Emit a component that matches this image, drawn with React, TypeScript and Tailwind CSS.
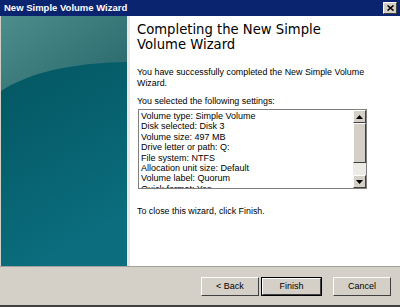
import React from "react";

const settings = [
  "Volume type: Simple Volume",
  "Disk selected: Disk 3",
  "Volume size: 497 MB",
  "Drive letter or path: Q:",
  "File system: NTFS",
  "Allocation unit size: Default",
  "Volume label: Quorum",
  "Quick format: Yes",
];

// teal artwork on the left side of the wizard
const SidePanel = () => (
  <svg width="127" height="250" viewBox="0 0 127 250" className="block">
    <defs>
      <linearGradient id="lower" x1="0" y1="0" x2="0.3" y2="1">
        <stop offset="0" stopColor="#02525c" />
        <stop offset="0.5" stopColor="#065f6c" />
        <stop offset="1" stopColor="#0b6d7d" />
      </linearGradient>
      <linearGradient id="upper" x1="0" y1="0" x2="1" y2="0.8">
        <stop offset="0" stopColor="#4d8d8b" />
        <stop offset="1" stopColor="#2a6a6e" />
      </linearGradient>
    </defs>
    <rect width="127" height="250" fill="url(#lower)" />
    <path d="M0 75 C 30 56, 70 47, 127 46 L127 0 L0 0 Z" fill="url(#upper)" />
  </svg>
);

const Arrow = ({ up }: { up?: boolean }) => (
  <div className="w-[13px] h-[13px] bg-[#d4d0c8] border border-t-white border-l-white border-r-[#404040] border-b-[#404040] flex items-center justify-center">
    <svg width="7" height="4" viewBox="0 0 7 4">
      {up ? <path d="M3.5 0 L7 4 L0 4 Z" fill="#000" /> : <path d="M0 0 L7 0 L3.5 4 Z" fill="#000" />}
    </svg>
  </div>
);

const Btn = ({ label, def }: { label: string; def?: boolean }) => (
  <div
    className={`h-[19px] flex items-center justify-center bg-[#d4d0c8] text-[9px] text-black ${
      def ? "border border-black w-[61px]" : "w-[58px]"
    }`}
  >
    <div className="w-full h-full flex items-center justify-center border border-t-white border-l-white border-r-[#404040] border-b-[#404040]">
      {label}
    </div>
  </div>
);

export default function App() {
  return (
    <div
      className="w-[400px] h-[307px] flex flex-col bg-[#d4d0c8] overflow-hidden"
      style={{ fontFamily: '"Liberation Sans", Arial, sans-serif' }}
    >
      {/* Title bar */}
      <div className="h-[16px] bg-[#0b2470] flex items-center justify-between pl-[4px] pr-[3px]">
        <span className="text-white font-bold text-[9.5px] leading-none">New Simple Volume Wizard</span>
        <div className="w-[14px] h-[12px] bg-[#d4d0c8] border border-t-white border-l-white border-r-[#404040] border-b-[#404040] flex items-center justify-center">
          <svg width="7" height="6" viewBox="0 0 7 6">
            <path d="M0.5 0.5 L6.5 5.5 M6.5 0.5 L0.5 5.5" stroke="#000" strokeWidth="1.6" />
          </svg>
        </div>
      </div>

      {/* Body */}
      <div className="h-[250px] flex border-l border-[#d4d0c8]">
        <div className="w-[126px] overflow-hidden">
          <SidePanel />
        </div>
        <div className="w-[3px] bg-[#e8e8e8]" />
        <div className="flex-1 bg-white pl-[7px] pr-[32px] pt-[6px] text-black">
          <h1
            className="text-[13.2px] leading-[15px] font-normal text-black"
            style={{ fontFamily: '"DejaVu Sans", Verdana, sans-serif' }}
          >
            Completing the New Simple
            <br />
            Volume Wizard
          </h1>
          <p className="mt-[15px] text-[8.9px] leading-[11px]">
            You have successfully completed the New Simple Volume Wizard.
          </p>
          <p className="mt-[7px] text-[8.9px] leading-[11px]">You selected the following settings:</p>
          <div className="mt-[2px] ml-[1px] w-[229px] h-[80px] border border-[#7f7f7f] flex bg-white">
            <div className="flex-1 overflow-hidden pl-[2px] pt-[1px]">
              {settings.map((s) => (
                <div key={s} className="text-[9px] leading-[10.4px] whitespace-nowrap">
                  {s}
                </div>
              ))}
            </div>
            <div className="w-[13px] flex flex-col bg-[#ecebe6]">
              <Arrow up />
              <div className="h-[40px] bg-[#d4d0c8] border border-t-white border-l-white border-r-[#404040] border-b-[#404040]" />
              <div className="flex-1" />
              <Arrow />
            </div>
          </div>
          <p className="mt-[17px] text-[8.9px] leading-[11px]">To close this wizard, click Finish.</p>
        </div>
      </div>

      {/* Footer */}
      <div className="border-t border-[#a0a0a0] h-[39px] flex items-start justify-end pt-[10px] pr-[9px]">
        <div className="flex">
          <Btn label="< Back" />
          <div className="ml-[2px]">
            <Btn label="Finish" def />
          </div>
          <div className="ml-[11px]">
            <Btn label="Cancel" />
          </div>
        </div>
      </div>
      <div className="h-[2px] bg-[#404040]" />
    </div>
  );
}
